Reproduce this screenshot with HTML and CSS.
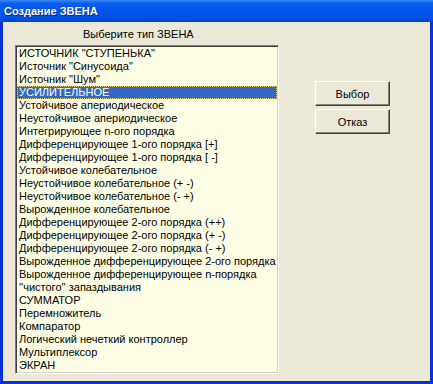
FILE: index.html
```html
<!DOCTYPE html>
<html lang="ru">
<head>
  <meta charset="utf-8">
  <title>Создание ЗВЕНА</title>
  <link rel="stylesheet" href="styles.css">
</head>
<body>

  <div class="window">
    <div class="titlebar">Создание ЗВЕНА</div>
    <div class="client">
      <div class="list-column">
        <div class="list-label">Выберите тип ЗВЕНА</div>
        <div class="listbox">
          <div class="item">ИСТОЧНИК "СТУПЕНЬКА"</div>
          <div class="item">Источник "Синусоида"</div>
          <div class="item">Источник "Шум"</div>
          <div class="item selected">УСИЛИТЕЛЬНОЕ</div>
          <div class="item">Устойчивое апериодическое</div>
          <div class="item">Неустойчивое апериодическое</div>
          <div class="item">Интегрирующее n-ого порядка</div>
          <div class="item">Дифференцирующее 1-ого порядка [+]</div>
          <div class="item">Дифференцирующее 1-ого порядка [ -]</div>
          <div class="item">Устойчивое колебательное</div>
          <div class="item">Неустойчивое колебательное (+ -)</div>
          <div class="item">Неустойчивое колебательное (- +)</div>
          <div class="item">Вырожденное колебательное</div>
          <div class="item">Дифференцирующее 2-ого порядка (++)</div>
          <div class="item">Дифференцирующее 2-ого порядка (+ -)</div>
          <div class="item">Дифференцирующее 2-ого порядка (- +)</div>
          <div class="item">Вырожденное дифференцирующее 2-ого порядка</div>
          <div class="item">Вырожденное дифференцирующее n-порядка</div>
          <div class="item">''чистого'' запаздывания</div>
          <div class="item">СУММАТОР</div>
          <div class="item">Перемножитель</div>
          <div class="item">Компаратор</div>
          <div class="item">Логический нечеткий контроллер</div>
          <div class="item">Мультиплексор</div>
          <div class="item">ЭКРАН</div>
        </div>
      </div>

      <!-- Кнопки справа -->
      <div class="buttons">
        <button class="btn">Выбор</button>
        <button class="btn">Отказ</button>
      </div>
    </div>
  </div>

</body>
</html>
```

FILE: styles.css
```css
body {
  margin: 0;
  font-family: "Liberation Sans", Arial, sans-serif;
  font-size: 11px;
  background: #ece9d8;
}

.window {
  width: 433px;
  height: 384px;
  box-sizing: border-box;
  display: flex;
  flex-direction: column;
  background: #0831d9;
  padding: 0 3px 3px 3px;
}

.titlebar {
  height: 22px;
  margin: 0 -3px;
  padding-left: 4px;
  box-sizing: border-box;
  background: linear-gradient(to bottom, #3d8cf7 0%, #0a5ff0 14%, #0055ea 50%, #0050e2 85%, #0041c8 100%);
  color: #ffffff;
  font-family: "Liberation Sans", Arial, sans-serif;
  font-weight: bold;
  font-size: 11px;
  line-height: 23px;
  text-shadow: 1px 1px 0 #0b2a8a;
}

.client {
  flex: 1;
  background: #ece9d8;
  display: flex;
  padding: 6px 0 0 12px;
}

.list-column {
  display: flex;
  flex-direction: column;
}

.list-label {
  line-height: 13px;
  margin-left: 68px;
  margin-bottom: 4px;
  color: #000000;
}

.listbox {
  width: 264px;
  height: 329px;
  box-sizing: border-box;
  background: #ffffe6;
  border-top: 1px solid #808080;
  border-left: 1px solid #808080;
  border-right: 1px solid #ffffff;
  border-bottom: 1px solid #ffffff;
  box-shadow: inset 1px 1px 0 #404040, inset -1px -1px 0 #d4d0c8;
  padding: 1px 1px 0 1px;
}

.item {
  height: 13px;
  line-height: 13px;
  padding-left: 2px;
  color: #000000;
  white-space: nowrap;
}

.item.selected {
  background: #316ac5;
  color: #ffffff;
  outline: 1px dotted #e8d070;
  outline-offset: -1px;
}

.buttons {
  display: flex;
  flex-direction: column;
  gap: 3px;
  margin-left: 36px;
  padding-top: 53px;
}

.btn {
  width: 75px;
  height: 25px;
  background: #ece9d8;
  font-family: "Liberation Sans", Arial, sans-serif;
  font-size: 11px;
  color: #000000;
  border-top: 1px solid #ffffff;
  border-left: 1px solid #ffffff;
  border-right: 1px solid #404040;
  border-bottom: 1px solid #404040;
  box-shadow: inset -1px -1px 0 #808080;
  padding: 0;
}
```
